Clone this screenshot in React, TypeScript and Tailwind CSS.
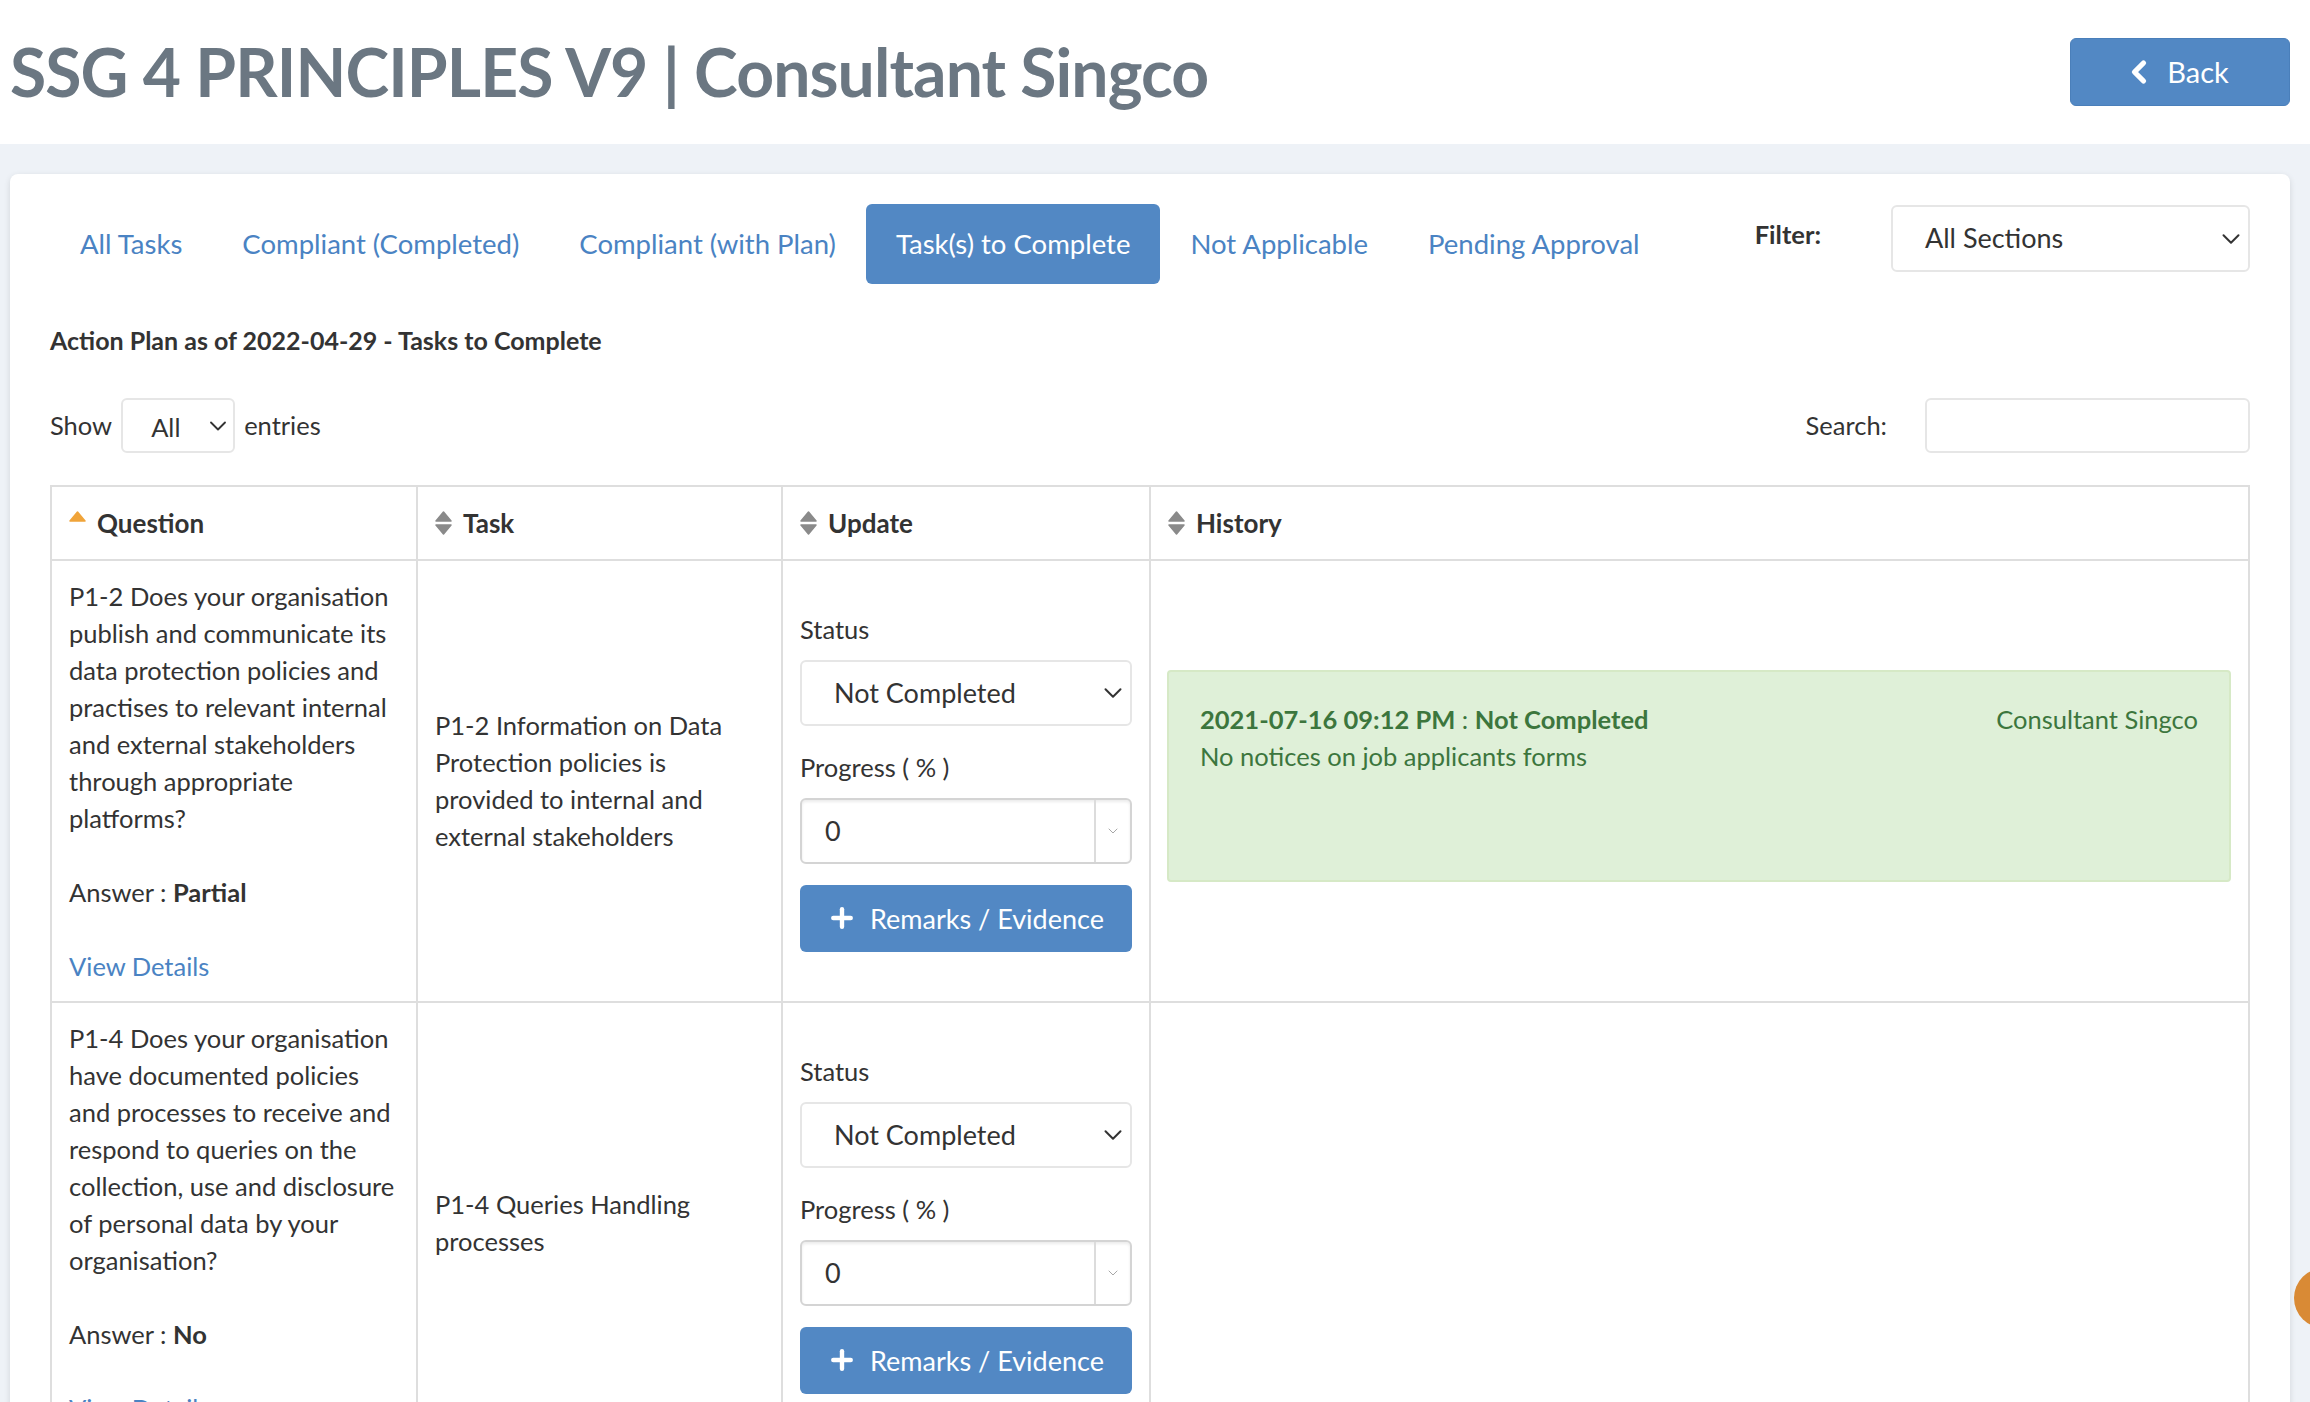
import { ChevronDown, ChevronLeft, Plus } from 'lucide-react';

const tabs = [
  'All Tasks',
  'Compliant (Completed)',
  'Compliant (with Plan)',
  'Task(s) to Complete',
  'Not Applicable',
  'Pending Approval',
];

interface Row {
  question: string;
  answer: string;
  task: string;
  history?: { date: string; status: string; by: string; note: string };
}

const rows: Row[] = [
  {
    question:
      'P1-2 Does your organisation publish and communicate its data protection policies and practises to relevant internal and external stakeholders through appropriate platforms?',
    answer: 'Partial',
    task: 'P1-2 Information on Data Protection policies is provided to internal and external stakeholders',
    history: {
      date: '2021-07-16 09:12 PM',
      status: 'Not Completed',
      by: 'Consultant Singco',
      note: 'No notices on job applicants forms',
    },
  },
  {
    question:
      'P1-4 Does your organisation have documented policies and processes to receive and respond to queries on the collection, use and disclosure of personal data by your organisation?',
    answer: 'No',
    task: 'P1-4 Queries Handling processes',
  },
];

function SortIcon({ active }: { active?: boolean }) {
  return (
    <svg width="17" height="24" viewBox="0 0 17 24" className="shrink-0">
      <path
        d="M8.5 1 L16 10 H1 Z"
        fill={active ? '#f0a43a' : '#8a8a8a'}
        stroke={active ? '#f0a43a' : '#8a8a8a'}
        strokeWidth="1.5"
        strokeLinejoin="round"
      />
      {!active && (
        <path d="M1 14 H16 L8.5 23 Z" fill="#8a8a8a" stroke="#8a8a8a" strokeWidth="1.5" strokeLinejoin="round" />
      )}
    </svg>
  );
}

function UpdateCell() {
  return (
    <div className="flex flex-col">
      <span className="leading-[37px]">Status</span>
      <div className="mt-[12px] flex h-[66px] items-center justify-between rounded-md border-2 border-[#e6e6e6] pl-[32px] pr-[2px] text-[27px]">
        <span>Not Completed</span>
        <ChevronDown size={30} strokeWidth={1.6} className="text-[#333]" />
      </div>
      <span className="mt-[23px] leading-[37px]">Progress ( % )</span>
      <div className="mt-[12px] flex h-[66px] overflow-hidden rounded-md border-2 border-[#d4d4d4] shadow-[inset_0_2px_3px_rgba(0,0,0,0.08)]">
        <span className="flex flex-1 items-center pl-[23px] text-[27px]">0</span>
        <span className="flex w-[36px] items-center justify-center border-l-2 border-[#dcdcdc]">
          <ChevronDown size={16} strokeWidth={1.3} className="text-[#999]" />
        </span>
      </div>
      <button className="mt-[21px] flex h-[67px] items-center gap-[13px] rounded-md bg-[#5288c4] pl-[27px] text-[27px] text-white">
        <Plus size={30} strokeWidth={3.5} />
        <span>Remarks / Evidence</span>
      </button>
    </div>
  );
}

export default function App() {
  return (
    <div className="h-screen overflow-hidden bg-[#eef2f7] font-['Lato',sans-serif] text-[25.5px] text-[#333]">
      {/* Header */}
      <header className="flex h-[144px] items-center justify-between bg-white pl-[10px] pr-[20px]">
        <h1 className="text-[66px] font-bold leading-none tracking-[-0.9px] text-[#6b7782]">
          SSG 4 PRINCIPLES V9 | Consultant Singco
        </h1>
        <button className="flex h-[68px] w-[220px] items-center justify-center gap-[10px] rounded-md border border-[#4a7fba] bg-[#5288c4] pr-[10px] text-[29px] text-white">
          <ChevronLeft size={36} strokeWidth={3.5} />
          Back
        </button>
      </header>

      <main className="pl-[10px] pr-[20px] pt-[30px]">
        <div className="rounded-lg bg-white px-[40px] pt-[30px] shadow-[0_2px_6px_rgba(0,0,0,0.12)]">
          {/* Tabs + filter */}
          <div className="flex items-start">
            <nav className="flex">
              {tabs.map((t) => (
                <a
                  key={t}
                  className={
                    t === 'Task(s) to Complete'
                      ? 'flex h-[80px] items-center rounded-md bg-[#5288c4] px-[30px] text-[27.5px] text-white'
                      : 'flex h-[80px] items-center px-[30px] text-[27.5px] text-[#4a83c3]'
                  }
                >
                  {t}
                </a>
              ))}
            </nav>
            <div className="ml-auto flex items-center gap-[70px] pt-[1px]">
              <span className="-mt-[8px] font-bold">Filter:</span>
              <div className="flex h-[67px] w-[359px] items-center justify-between rounded-md border-2 border-[#e6e6e6] pl-[32px] pr-[2px] text-[27px]">
                <span>All Sections</span>
                <ChevronDown size={30} strokeWidth={1.6} />
              </div>
            </div>
          </div>

          <h2 className="mt-[38px] text-[25px] font-bold leading-[37px]">
            Action Plan as of 2022-04-29 - Tasks to Complete
          </h2>

          {/* Show entries / search */}
          <div className="mt-[39px] flex items-center">
            <span>Show</span>
            <div className="ml-[9px] flex h-[55px] w-[114px] items-center justify-between rounded-md border-2 border-[#e6e6e6] pl-[28px] pr-[1px]">
              <span className="mt-[4px]">All</span>
              <ChevronDown size={28} strokeWidth={1.6} />
            </div>
            <span className="ml-[9px]">entries</span>
            <span className="ml-auto">Search:</span>
            <div className="ml-[38px] h-[55px] w-[325px] rounded-md border-2 border-[#e6e6e6]" />
          </div>

          {/* Table */}
          <table className="mt-[32px] w-full table-fixed border-collapse">
            <colgroup>
              <col className="w-[366px]" />
              <col className="w-[365px]" />
              <col className="w-[368px]" />
              <col />
            </colgroup>
            <thead>
              <tr className="h-[74px] text-[26px]">
                {['Question', 'Task', 'Update', 'History'].map((h, i) => (
                  <th key={h} className="border-2 border-[#dedede] px-[17px] text-left font-bold">
                    <div className="flex items-center gap-[11px]">
                      <SortIcon active={i === 0} />
                      <span>{h}</span>
                    </div>
                  </th>
                ))}
              </tr>
            </thead>
            <tbody className="leading-[37px]">
              {rows.map((r) => (
                <tr key={r.task}>
                  <td className="border-2 border-[#dedede] px-[17px] pb-[16px] pt-[17px] align-top">
                    {r.question}
                    <br />
                    <br />
                    Answer : <b>{r.answer}</b>
                    <br />
                    <br />
                    <a className="text-[#4a83c3]">View Details</a>
                  </td>
                  <td className="border-2 border-[#dedede] px-[17px] align-middle">{r.task}</td>
                  <td className="border-2 border-[#dedede] px-[17px] align-middle">
                    <UpdateCell />
                  </td>
                  <td className="border-2 border-[#dedede] pl-[16px] pr-[17px] align-middle">
                    {r.history && (
                      <div className="mb-[10px] flex h-[212px] flex-col rounded-sm border-2 border-[#d6e9c6] bg-[#dff0d8] px-[31px] pt-[29px] text-[25.5px] text-[#3c763d]">
                        <div className="flex justify-between">
                          <span>
                            <b>{r.history.date}</b> : <b>{r.history.status}</b>
                          </span>
                          <span>{r.history.by}</span>
                        </div>
                        <span>{r.history.note}</span>
                      </div>
                    )}
                  </td>
                </tr>
              ))}
            </tbody>
          </table>
        </div>
      </main>

      {/* floating help bubble, mostly off-screen */}
      <div className="fixed left-[2294px] top-[1268px] h-[60px] w-[60px] rounded-full bg-[#d98a35]" />
    </div>
  );
}
